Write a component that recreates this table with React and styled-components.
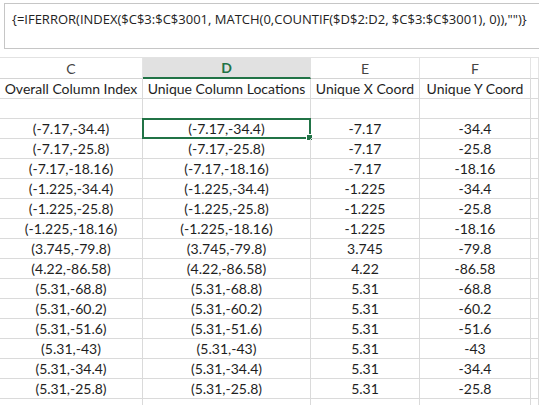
import React from "react";
import styled, { createGlobalStyle } from "styled-components";

const Global = createGlobalStyle`
  html, body { margin: 0; padding: 0; background: #fff; }
  body { width: 539px; height: 405px; overflow: hidden; }
`;

const Page = styled.div`
  width: 539px;
  height: 405px;
  overflow: hidden;
  background: #fff;
  display: flex;
  flex-direction: column;
`;

const FormulaArea = styled.div`
  flex-shrink: 0;
  height: 58px;
  padding: 3px 0 0 4px;
  box-sizing: border-box;
  border-bottom: 1px solid #e2e2e2;
`;

const FormulaBox = styled.div`
  height: 46px;
  box-sizing: border-box;
  border: 1px solid #c6c6c6;
  border-right: none;
  padding: 6px 0 0 7px;
  font-family: "Open Sans", sans-serif;
  font-size: 13px;
  color: #222;
  white-space: nowrap;
`;

const Grid = styled.div`
  flex-shrink: 0;
  display: grid;
  grid-template-columns: 143px 168px 109px 111px 1fr;
  font-family: Lato, sans-serif;
  font-size: 14px;
  color: #1e1e1e;
`;

const HeadCell = styled.div`
  height: 21px;
  box-sizing: border-box;
  display: flex;
  align-items: center;
  justify-content: center;
  border-right: 1px solid ${p => (p.$active ? "#e1e1e1" : "#e4e4e4")};
  border-bottom: ${p => (p.$active ? "2px solid #217346" : "1px solid #d4d4d4")};
  background: ${p => (p.$active ? "#e1e1e1" : "#fff")};
  color: ${p => (p.$active ? "#217346" : "#444")};
  font-weight: ${p => (p.$active ? 700 : 400)};
  font-size: 14px;
`;

const Cell = styled.div`
  position: relative;
  height: 20px;
  box-sizing: border-box;
  display: flex;
  align-items: center;
  justify-content: center;
  border-right: 1px solid #dadada;
  border-bottom: 1px solid #dadada;
  white-space: nowrap;
  overflow: visible;
`;

const Selection = styled.div`
  position: absolute;
  left: -1px;
  top: -1px;
  right: -1px;
  bottom: -1px;
  border: 2px solid #217346;
  pointer-events: none;
`;

const Handle = styled.div`
  position: absolute;
  right: -4px;
  bottom: -4px;
  width: 5px;
  height: 5px;
  background: #217346;
  border: 1px solid #fff;
`;

const rows = [
  ["(-7.17,-34.4)", "-7.17", "-34.4"],
  ["(-7.17,-25.8)", "-7.17", "-25.8"],
  ["(-7.17,-18.16)", "-7.17", "-18.16"],
  ["(-1.225,-34.4)", "-1.225", "-34.4"],
  ["(-1.225,-25.8)", "-1.225", "-25.8"],
  ["(-1.225,-18.16)", "-1.225", "-18.16"],
  ["(3.745,-79.8)", "3.745", "-79.8"],
  ["(4.22,-86.58)", "4.22", "-86.58"],
  ["(5.31,-68.8)", "5.31", "-68.8"],
  ["(5.31,-60.2)", "5.31", "-60.2"],
  ["(5.31,-51.6)", "5.31", "-51.6"],
  ["(5.31,-43)", "5.31", "-43"],
  ["(5.31,-34.4)", "5.31", "-34.4"],
  ["(5.31,-25.8)", "5.31", "-25.8"],
];

export default function App() {
  return (
    <Page>
      <Global />
      <FormulaArea>
        <FormulaBox>{'{=IFERROR(INDEX($C$3:$C$3001, MATCH(0,COUNTIF($D$2:D2, $C$3:$C$3001), 0)),"")}'}</FormulaBox>
      </FormulaArea>
      <Grid>
        <HeadCell>C</HeadCell>
        <HeadCell $active>D</HeadCell>
        <HeadCell>E</HeadCell>
        <HeadCell>F</HeadCell>
        <HeadCell />
        <Cell>Overall Column Index</Cell>
        <Cell>Unique Column Locations</Cell>
        <Cell>Unique X Coord</Cell>
        <Cell>Unique Y Coord</Cell>
        <Cell />
        <Cell />
        <Cell />
        <Cell />
        <Cell />
        <Cell />
        {rows.map((r, i) => (
          <React.Fragment key={i}>
            <Cell>{r[0]}</Cell>
            <Cell>
              {r[0]}
              {i === 0 && (
                <Selection>
                  <Handle />
                </Selection>
              )}
            </Cell>
            <Cell>{r[1]}</Cell>
            <Cell>{r[2]}</Cell>
            <Cell />
          </React.Fragment>
        ))}
        <Cell />
        <Cell />
        <Cell />
        <Cell />
        <Cell />
      </Grid>
    </Page>
  );
}
